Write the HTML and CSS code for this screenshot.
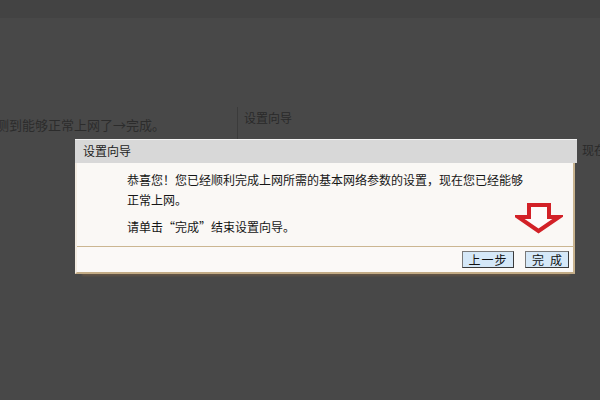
FILE: index.html
```html
<!DOCTYPE html>
<html lang="zh-CN">
<head>
    <meta charset="UTF-8">
    <meta name="viewport" content="width=device-width, initial-scale=1.0">
    <title>设置向导</title>
    <link rel="stylesheet" href="styles.css">
</head>
<body>
    <div class="top-band"></div>
    <div class="backdrop">
        <div class="bg-note">测到能够正常上网了→完成。</div>
        <div class="bg-panel">
            <div class="bg-panel-title">设置向导</div>
            <div class="bg-panel-line">现在您已经能够正常上网。</div>
        </div>
    </div>

    <!-- Wizard dialog -->
    <div class="dialog">
        <div class="dialog-title">设置向导</div>
        <div class="dialog-body">
            <div class="dialog-content">
                <p>恭喜您！您已经顺利完成上网所需的基本网络参数的设置，现在您已经能够<br>正常上网。</p>
                <p class="hint">请单击“完成”结束设置向导。</p>
            </div>
            <div class="dialog-footer">
                <button class="btn">上一步</button>
                <button class="btn btn-done">完成</button>
            </div>
        </div>
        <svg class="arrow" width="48" height="36" viewBox="0 0 48 36">
            <path d="M14 4 H34 V16 H44 L23.5 30 L3 16 H14 Z" fill="#fdfbfa" stroke="#d22127" stroke-width="4" stroke-linejoin="miter"/>
        </svg>
    </div>
</body>
</html>
```

FILE: styles.css
```css
* {
    margin: 0;
    padding: 0;
    box-sizing: border-box;
}

body {
    font-family: "Noto Sans CJK SC", "Liberation Sans", sans-serif;
    background: #484848;
    width: 600px;
    height: 400px;
    overflow: hidden;
    position: relative;
}

.top-band {
    height: 18px;
    background: #434343;
}

/* Page behind the dialog */
.backdrop {
    display: flex;
}

.bg-note {
    width: 237px;
    padding-top: 98px;
    font-size: 13px;
    line-height: 18px;
    color: #2c2c2c;
    white-space: nowrap;
    overflow: hidden;
    text-indent: -4px;
}

.bg-panel {
    flex: 1;
    margin-top: 89px;
    overflow: hidden;
    color: #2a2a2a;
    font-size: 12px;
    line-height: 18px;
}

.bg-panel-title {
    height: 32px;
    padding: 2px 6px 0;
    border-left: 1px solid #3b3b3b;
}

.bg-panel-line {
    margin-top: 2px;
    padding-left: 345px;
    white-space: nowrap;
}

/* Dialog */
.dialog {
    position: absolute;
    left: 75px;
    top: 139px;
    width: 502px;
    box-shadow: 0 9px 2px -7px rgba(150, 110, 70, 0.35);
}

.dialog-title {
    height: 24px;
    background: #d8d8d8;
    border-top: 1px solid #f2f2f2;
    padding-left: 8px;
    font-size: 12px;
    line-height: 22px;
    color: #1e1e1e;
}

.dialog-body {
    width: 500px;
    background: #faf8f5;
    border-left: 2px solid #f3ece2;
    border-right: 2px solid #c7b28e;
    border-bottom: 2px solid #c2ab85;
}

.dialog-content {
    height: 84px;
    padding: 7px 0 0 50px;
    font-size: 12px;
    line-height: 20px;
    color: #161616;
    border-bottom: 1px solid #cbb691;
}

.dialog-content .hint {
    margin-top: 7px;
}

.dialog-footer {
    height: 25px;
    display: flex;
    justify-content: flex-end;
    align-items: center;
    gap: 11px;
    padding-right: 4px;
    background: #fbf9f7;
}

.btn {
    font-family: inherit;
    height: 17px;
    width: 52px;
    font-size: 12px;
    line-height: 15px;
    color: #111;
    background: #d5e8f8;
    border: 1px solid #3a3a3a;
    border-top-color: #7a7a7a;
    border-left-color: #7a7a7a;
    letter-spacing: 1px;
}

.btn-done {
    width: 44px;
    letter-spacing: 6px;
    padding-left: 6px;
}

/* Red marker drawn over the dialog */
.arrow {
    position: absolute;
    left: 440px;
    top: 62px;
}
```
